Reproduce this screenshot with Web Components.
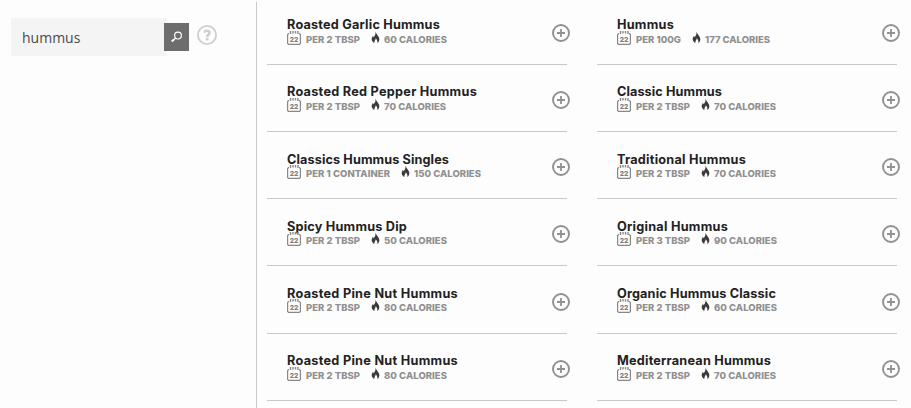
<!DOCTYPE html>
<html lang="en">
<head>
<meta charset="utf-8">
<title>Food search</title>
<style>
    body {
        margin: 0;
        height: 408px;
        overflow: hidden;
        background: #fdfdfd;
        font-family: Inter, "Liberation Sans", sans-serif;
    }
</style>
</head>
<body>
<food-search query="hummus"></food-search>
<script>
// Text tracked to a given measure
class FitText extends HTMLElement{
    constructor(){
        super();
        this.shadowDOM = this.attachShadow({mode: "open"});
    }

    connectedCallback(){
        this.shadowDOM.innerHTML = `
        <style>
            :host {
                display: block;
                white-space: nowrap;
            }
            span {
                display: inline-block;
            }
        </style>
        <span><slot></slot></span>
        `;
        const width = Number(this.getAttribute("width"));
        const span = this.shadowDOM.querySelector("span");
        const natural = span.getBoundingClientRect().width;
        span.style.letterSpacing = `${(width - natural) / this.textContent.length}px`;
        this.style.width = `${width}px`;
    }
}

class SearchBox extends HTMLElement{
    constructor(){
        super();
        this.shadowDOM = this.attachShadow({mode: "open"});
    }

    connectedCallback(){
        this.shadowDOM.innerHTML = `
        <style>
            :host {
                display: flex;
                align-items: center;
                height: 38px;
            }
            .field {
                display: flex;
                align-items: center;
                box-sizing: border-box;
                width: 156px;
                height: 38px;
                padding: 2px 0 0 11px;
                background: #f4f4f4;
                color: #4a4a4a;
                font: 14px/20px "Open Sans", sans-serif;
            }
            .button {
                width: 25px;
                height: 28px;
                margin-left: -3px;
                background: #6d6d6d;
            }
            .help {
                width: 20px;
                height: 20px;
                margin: -4px 0 0 8px;
            }
            svg {
                display: block;
            }
        </style>
        <div class="field"><fit-text width="52"><slot></slot></fit-text></div>
        <div class="button">
            <svg width="25" height="28" fill="none" stroke="#fff">
                <circle cx="14" cy="12.6" r="3.4" stroke-width="1.2"/>
                <path d="M11.5 15.2L9.8 16.7" stroke-width="1.2"/>
                <path d="M10 16.5L7.6 18.6" stroke-width="2"/>
            </svg>
        </div>
        <div class="help">
            <svg width="20" height="20" fill="none" stroke="#cecece">
                <circle cx="10" cy="10" r="9.1" stroke-width="1.8"/>
                <path d="M7.6 7.6C7.7 5.3 12.5 5 12.5 7.8C12.5 9.6 10.2 9.4 10.2 11.9" stroke-width="2.6"/>
                <path d="M10.2 12.9V15.4" stroke-width="2.6"/>
            </svg>
        </div>
        `;
    }
}

class FoodItem extends HTMLElement{
    constructor(){
        super();
        this.shadowDOM = this.attachShadow({mode: "open"});
    }

    set food(food){
        this._food = food;
        this.render();
    }

    render(){
        const [name, nameWidth, serving, servingWidth, calories, caloriesWidth] = this._food;
        this.shadowDOM.innerHTML = `
        <style>
            :host {
                display: flex;
                justify-content: space-between;
                align-items: flex-end;
                box-sizing: border-box;
                width: 300px;
                padding-left: 20px;
                border-bottom: 1px solid #c9c9c9;
            }
            .info {
                padding-bottom: 18.2px;
            }
            .name {
                height: 14.4px;
                color: #222;
                font-size: 12.7px;
                font-weight: 680;
                line-height: 18px;
            }
            .meta {
                display: flex;
                height: 15px;
                color: #909090;
                font-size: 9.5px;
                font-weight: 800;
                line-height: 17px;
            }
            .calendar {
                margin-right: 5px;
            }
            .calendar text {
                font-size: 6.8px;
                font-weight: 800;
            }
            .flame {
                margin: 0 4px 0 11px;
            }
            .add {
                margin: 0 -3px 22px 0;
            }
            svg {
                display: block;
                flex: none;
            }
        </style>
        <div class="info">
            <fit-text class="name" width="${nameWidth}">${name}</fit-text>
            <div class="meta">
                <svg class="calendar" width="14" height="14" fill="none" stroke="#888">
                    <path d="M2 2.6H1.6L.6 3.6V12.4L1.6 13.4H12.4L13.4 12.4V3.6L12.4 2.6H12" stroke-width="1.2"/>
                    <path d="M3.5 0V3M6 0V2.5M8.5 0V2.5M11 0V3" stroke-width="1.4"/>
                    <text x="7" y="10.8" text-anchor="middle" fill="#808080" stroke="none">22</text>
                </svg>
                <fit-text width="${servingWidth}">${serving}</fit-text>
                <svg class="flame" width="9" height="14" fill="#3b3b3b">
                    <path d="M4.6 .4C5 3 7.3 4.4 8.1 6.7C8.8 9 7.8 11.1 6.3 12C6.8 10 6 8.5 4.7 7.2C4.7 9 3 9.6 3.4 12C1.5 11.2 .4 9.4 .7 7.6C.9 6.5 1.5 5.7 1.9 4.7L2.6 6.2C4.1 4.5 4.7 2.7 4.6 .4Z"/>
                </svg>
                <fit-text width="${caloriesWidth}">${calories}</fit-text>
            </div>
        </div>
        <svg class="add" width="18" height="18" fill="none" stroke="#919191">
            <circle cx="9" cy="9" r="8" stroke-width="1.9"/>
            <path d="M9 5V13M5 9H13" stroke-width="1.8"/>
        </svg>
        `;
    }
}

class FoodSearch extends HTMLElement{
    constructor(){
        super();
        this.shadowDOM = this.attachShadow({mode: "open"});
    }

    connectedCallback(){
        this.shadowDOM.innerHTML = `
        <style>
            :host {
                display: flex;
                box-sizing: border-box;
                height: 408px;
                padding-top: 2px;
            }
            .sidebar {
                box-sizing: border-box;
                width: 257px;
                padding: 16px 0 0 11px;
                border-right: 1px solid #c9c9c9;
            }
            .results {
                display: grid;
                grid-template-columns: 300px 300px;
                grid-template-rows: 62.8px repeat(5, 67.2px);
                column-gap: 30px;
                padding-left: 10px;
            }
        </style>
        <div class="sidebar"><search-box>${this.getAttribute("query")}</search-box></div>
        <div class="results"></div>
        `;
        const results = this.shadowDOM.querySelector(".results");
        foods.forEach(food => {
            const item = document.createElement("food-item");
            results.appendChild(item);
            item.food = food;
        });
    }
}

// name, serving and calories, each followed by its measure in px
const foods = [
    ["Roasted Garlic Hummus", 153, "PER 2 TBSP", 54, "60 CALORIES", 63],
    ["Hummus", 57, "PER 100G", 45, "177 CALORIES", 65],
    ["Roasted Red Pepper Hummus", 190, "PER 2 TBSP", 54, "70 CALORIES", 62],
    ["Classic Hummus", 105, "PER 2 TBSP", 54, "70 CALORIES", 62],
    ["Classics Hummus Singles", 162, "PER 1 CONTAINER", 84, "150 CALORIES", 67],
    ["Traditional Hummus", 129, "PER 2 TBSP", 54, "70 CALORIES", 62],
    ["Spicy Hummus Dip", 120, "PER 2 TBSP", 54, "50 CALORIES", 63],
    ["Original Hummus", 111, "PER 3 TBSP", 54, "90 CALORIES", 63],
    ["Roasted Pine Nut Hummus", 171, "PER 2 TBSP", 54, "80 CALORIES", 63],
    ["Organic Hummus Classic", 159, "PER 2 TBSP", 54, "60 CALORIES", 63],
    ["Roasted Pine Nut Hummus", 171, "PER 2 TBSP", 54, "80 CALORIES", 63],
    ["Mediterranean Hummus", 154, "PER 2 TBSP", 54, "70 CALORIES", 62]
];

customElements.define("fit-text", FitText);
customElements.define("search-box", SearchBox);
customElements.define("food-item", FoodItem);
customElements.define("food-search", FoodSearch);
</script>
</body>
</html>
